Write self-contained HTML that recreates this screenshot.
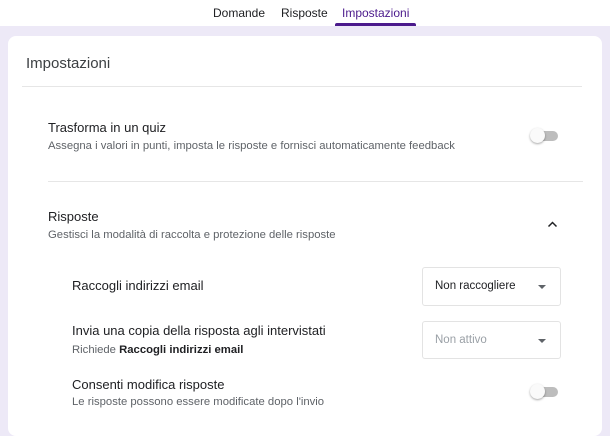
<!DOCTYPE html>
<html><head><style>
body{margin:0;width:610px;height:420px;overflow:hidden;background:#ede9f7;font-family:"Liberation Sans",sans-serif;position:relative}
.top{position:absolute;left:0;top:0;width:610px;height:26px;background:#fff}
.tab{position:absolute;top:6px;font-size:12px;color:#202124}
.ul{position:absolute;left:335px;top:23px;width:81px;height:3px;background:#4b1a8c;border-radius:2px 2px 0 0}
.card{position:absolute;left:8px;top:36px;width:594px;height:400px;background:#fff;border-radius:8px}
.t{position:absolute;font-size:13px;color:#202124;white-space:nowrap}
.s{position:absolute;font-size:11.3px;color:#5f6368;white-space:nowrap}
.hr{position:absolute;height:1px;background:#e6e6e6}
.tg{position:absolute;width:28px;height:20px}
.tg .tr{position:absolute;left:4px;top:5px;width:24px;height:10px;border-radius:5px;background:#bdbdbd}
.tg .kn{position:absolute;left:0;top:2px;width:15px;height:15px;border-radius:50%;background:#fafafa;box-shadow:0 1px 2px rgba(0,0,0,.35)}
.dd{position:absolute;left:422px;width:137px;border:1px solid #e3e3e3;border-radius:3px;font-size:11.5px}
.dd span{position:absolute;left:12px}
.dd i{position:absolute;right:14px;width:0;height:0;border-left:4px solid transparent;border-right:4px solid transparent;border-top:4px solid #5f6368}
</style></head><body>
<div class="top">
<div class="tab" style="left:213px">Domande</div>
<div class="tab" style="left:281px">Risposte</div>
<div class="tab" style="left:342px;color:#4b1a8c">Impostazioni</div>
<div class="ul"></div>
</div>
<div class="card"></div>
<div class="t" style="left:26px;top:55px;font-size:15px;color:#3c4043">Impostazioni</div>
<div class="hr" style="left:22px;top:86px;width:560px"></div>
<div class="t" style="left:48px;top:120px">Trasforma in un quiz</div>
<div class="s" style="left:48px;top:140px">Assegna i valori in punti, imposta le risposte e fornisci automaticamente feedback</div>
<div class="tg" style="left:530px;top:126px"><div class="tr"></div><div class="kn"></div></div>
<div class="hr" style="left:48px;top:181px;width:535px"></div>
<div class="t" style="left:48px;top:209px">Risposte</div>
<div class="s" style="left:48px;top:229px">Gestisci la modalità di raccolta e protezione delle risposte</div>
<svg style="position:absolute;left:547px;top:220px" width="11" height="8"><path d="M1.5 6.5L5.5 2.5L9.5 6.5" stroke="#202124" stroke-width="1.5" fill="none"/></svg>
<div class="t" style="left:72px;top:278px">Raccogli indirizzi email</div>
<div class="dd" style="top:267px;height:37px"><span style="top:12px;color:#202124">Non raccogliere</span><i style="top:17px"></i></div>
<div class="t" style="left:72px;top:323px">Invia una copia della risposta agli intervistati</div>
<div class="s" style="left:72px;top:344px">Richiede <b style="color:#202124">Raccogli indirizzi email</b></div>
<div class="dd" style="top:321px;height:36px"><span style="top:12px;color:#9aa0a6">Non attivo</span><i style="top:17px"></i></div>
<div class="t" style="left:72px;top:377px">Consenti modifica risposte</div>
<div class="s" style="left:72px;top:396px">Le risposte possono essere modificate dopo l'invio</div>
<div class="tg" style="left:530px;top:382px"><div class="tr"></div><div class="kn"></div></div>
</body></html>
